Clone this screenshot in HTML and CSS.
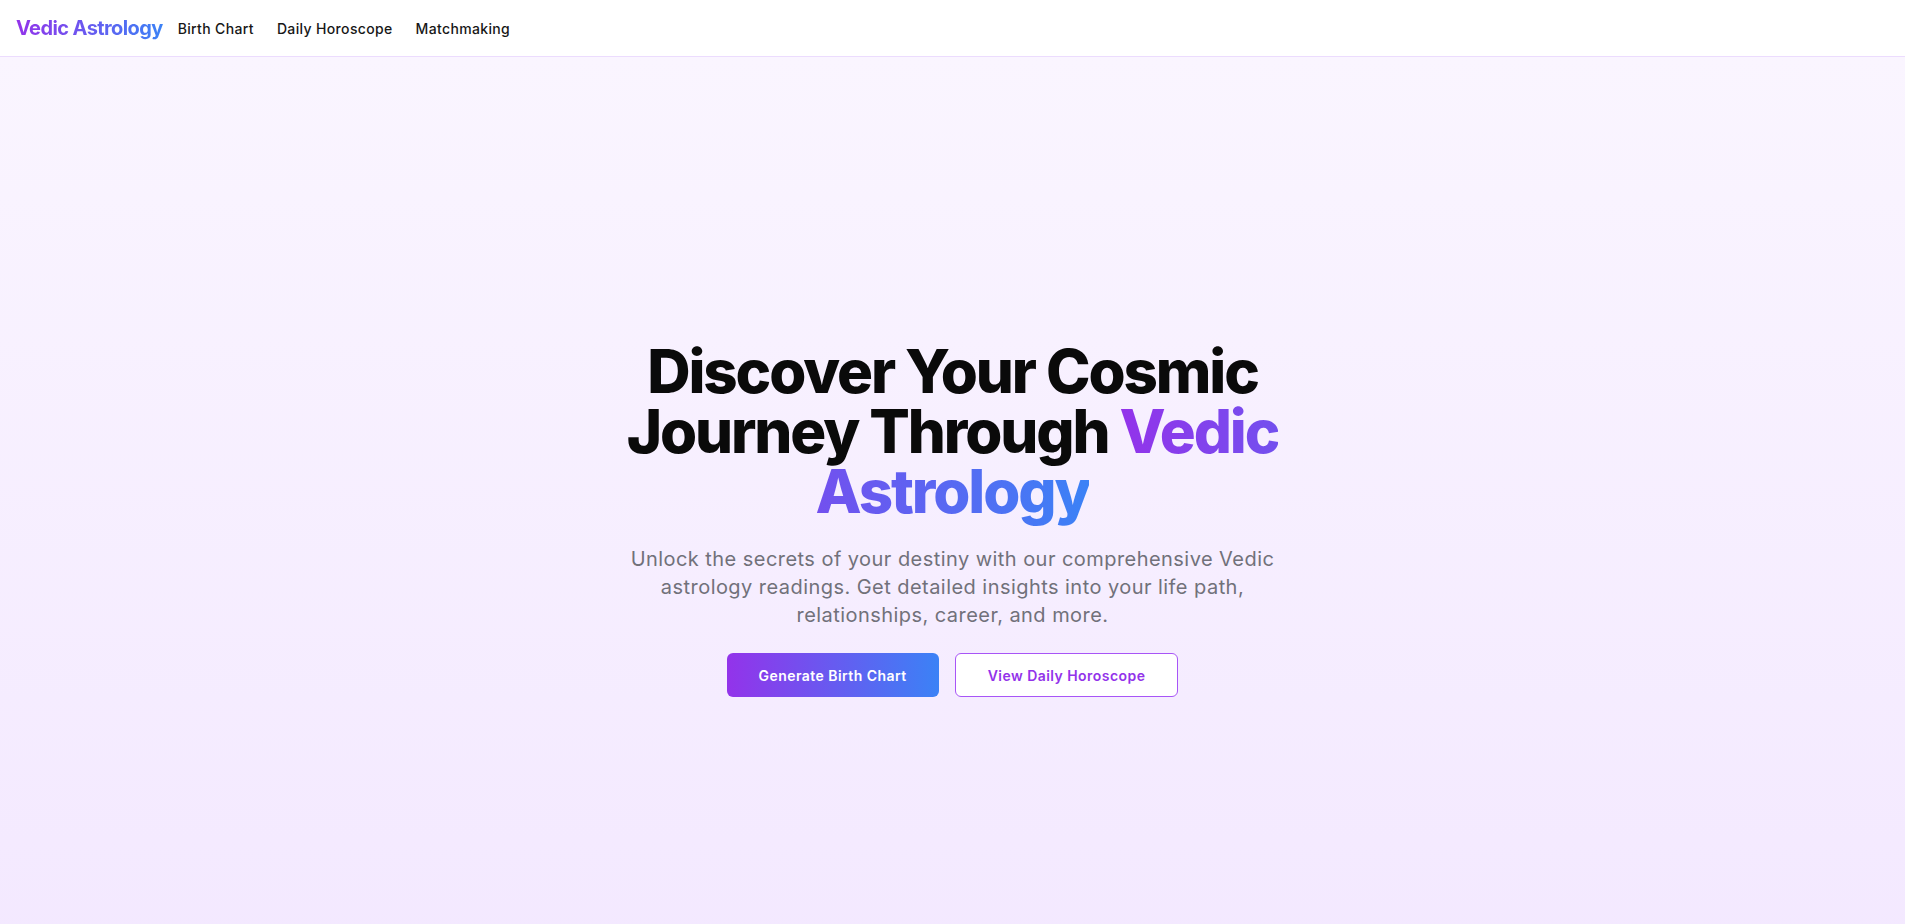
FILE: index.html
```html
<!DOCTYPE html>
<html lang="en">
<head>
<meta charset="utf-8">
<title>Vedic Astrology</title>
<link rel="stylesheet" href="styles.css">
</head>
<body>
<header class="topbar">
  <nav class="nav">
    <a class="logo" href="#">Vedic Astrology</a>
    <div class="nav-links">
      <a href="#">Birth Chart</a>
      <a href="#">Daily Horoscope</a>
      <a href="#">Matchmaking</a>
    </div>
  </nav>
</header>
<main class="hero">
  <div class="hero-inner">
    <h1 class="title">Discover Your Cosmic<br>Journey Through <span class="grad-text">Vedic<br>Astrology</span></h1>
    <p class="lead">Unlock the secrets of your destiny with our comprehensive Vedic<br>astrology readings. Get detailed insights into your life path,<br>relationships, career, and more.</p>
    <div class="actions">
      <a class="btn btn-primary" href="#">Generate Birth Chart</a>
      <a class="btn btn-outline" href="#">View Daily Horoscope</a>
    </div>
  </div>
</main>
</body>
</html>
```
FILE: styles.css
```css
* { box-sizing: border-box; }
html, body { margin: 0; padding: 0; }
body {
  font-family: "Inter", "Liberation Sans", sans-serif;
  color: #0a0a0a;
  background: #faf5ff;
}
a { text-decoration: none; color: inherit; }

.topbar {
  background: #ffffff;
  border-bottom: 1px solid #ecdcfe;
}
.nav {
  height: 56px;
  display: flex;
  align-items: center;
  padding: 0 16px;
}
.logo {
  font-size: 20px;
  font-weight: 700;
  letter-spacing: -0.6px;
  background: linear-gradient(to right, #9333ea, #3b82f6);
  -webkit-background-clip: text;
  background-clip: text;
  color: transparent;
}
.nav-links {
  display: flex;
  gap: 23px;
  margin-left: 15px;
}
.nav-links a {
  font-size: 14px;
  font-weight: 500;
  letter-spacing: 0.35px;
  color: #171717;
}

.hero {
  min-height: 100vh;
  display: flex;
  align-items: center;
  justify-content: center;
  background: linear-gradient(to bottom, #faf5ff, #f3e8ff);
}
.hero-inner {
  text-align: center;
  max-width: 768px;
}
.title {
  margin: 0 0 24px;
  font-size: 60px;
  line-height: 60px;
  font-weight: 800;
  letter-spacing: -2.1px;
  color: #0a0a0a;
}
.grad-text {
  background: linear-gradient(to right, #9333ea, #3b82f6);
  -webkit-background-clip: text;
  background-clip: text;
  color: transparent;
}
.lead {
  margin: 0 0 24px;
  font-size: 20px;
  line-height: 28px;
  letter-spacing: 0.45px;
  color: #71717a;
}
.actions {
  display: flex;
  justify-content: center;
  gap: 16px;
}
.btn {
  display: inline-flex;
  align-items: center;
  justify-content: center;
  height: 44px;
  padding: 0 32px;
  border-radius: 6px;
  font-size: 14px;
  font-weight: 600;
  letter-spacing: 0.45px;
}
.btn-primary {
  color: #ffffff;
  background: linear-gradient(to right, #9333ea, #3b82f6);
}
.btn-outline {
  color: #9333ea;
  background: #ffffff;
  border: 1px solid #a855f7;
}
```
